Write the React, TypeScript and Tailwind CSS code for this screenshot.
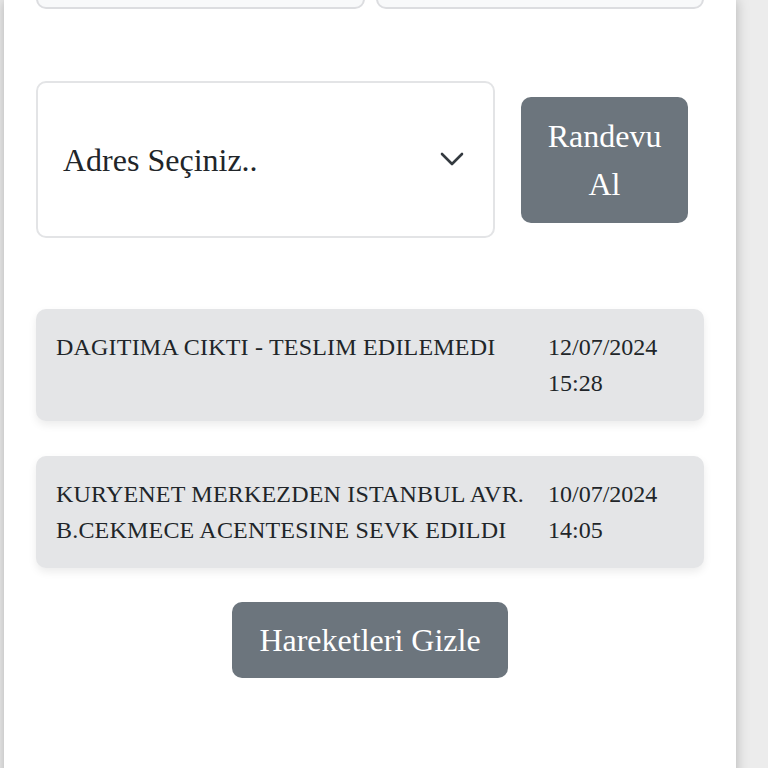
import React from 'react';

const serif = { fontFamily: '"Liberation Serif", "Times New Roman", serif' };

interface Movement {
  text: string[];
  date: string;
  time: string;
}

const MOVEMENTS: Movement[] = [
  { text: ['DAGITIMA CIKTI - TESLIM EDILEMEDI'], date: '12/07/2024', time: '15:28' },
  {
    text: ['KURYENET MERKEZDEN ISTANBUL AVR.', 'B.CEKMECE ACENTESINE SEVK EDILDI'],
    date: '10/07/2024',
    time: '14:05',
  },
];

function MovementCard({ item }: { item: Movement }) {
  return (
    <div className="flex gap-5 rounded-[10px] bg-[#e4e5e7] p-5 text-[24px] leading-[36px] text-[#212529] shadow-[0_4px_8px_rgba(0,0,0,0.08)]">
      <div className="flex-1 whitespace-nowrap tracking-[0.2px]">
        {item.text.map((line) => (
          <div key={line}>{line}</div>
        ))}
      </div>
      <div className="w-[136px]">
        <div>{item.date}</div>
        <div>{item.time}</div>
      </div>
    </div>
  );
}

export default function App() {
  return (
    <div className="h-[768px] overflow-hidden bg-[#ececec]" style={serif}>
      <div className="ml-[4px] flex h-[800px] w-[732px] flex-col bg-white px-8 shadow-[0_0_12px_rgba(0,0,0,0.25)]">
        {/* Top inputs (cut off) */}
        <div className="-mt-[41px] flex gap-[11px]">
          <div className="h-[50px] flex-1 rounded-[10px] border-2 border-[#dcdde0] bg-[#f8f9fa]" />
          <div className="h-[50px] flex-1 rounded-[10px] border-2 border-[#dcdde0] bg-[#f8f9fa]" />
        </div>

        {/* Address select + appointment */}
        <div className="mt-[72px] flex items-center gap-[26px]">
          <div className="flex h-[157px] w-[459px] items-center justify-between rounded-[10px] border-2 border-[#e3e4e6] pl-[25px] pr-[29px] text-[32px] text-[#212529]">
            <span>Adres Seçiniz..</span>
            <svg width="24" height="15" viewBox="0 0 24 15" fill="none">
              <path d="M2 2l10 10L22 2" stroke="#343a40" strokeWidth="2.6" strokeLinecap="round" strokeLinejoin="round" />
            </svg>
          </div>
          <button className="w-[167px] rounded-[10px] bg-[#6c757d] py-[15px] text-center text-[32px] leading-[48px] text-white">
            Randevu
            <br />
            Al
          </button>
        </div>

        {/* Movements */}
        <div className="mt-[71px] flex flex-col gap-[35px]">
          {MOVEMENTS.map((m) => (
            <MovementCard key={m.date} item={m} />
          ))}
        </div>

        <div className="mt-[34px] flex justify-center">
          <button className="rounded-[10px] bg-[#6c757d] px-[27px] py-[14px] text-[32px] leading-[48px] text-white">
            Hareketleri Gizle
          </button>
        </div>
      </div>
    </div>
  );
}
